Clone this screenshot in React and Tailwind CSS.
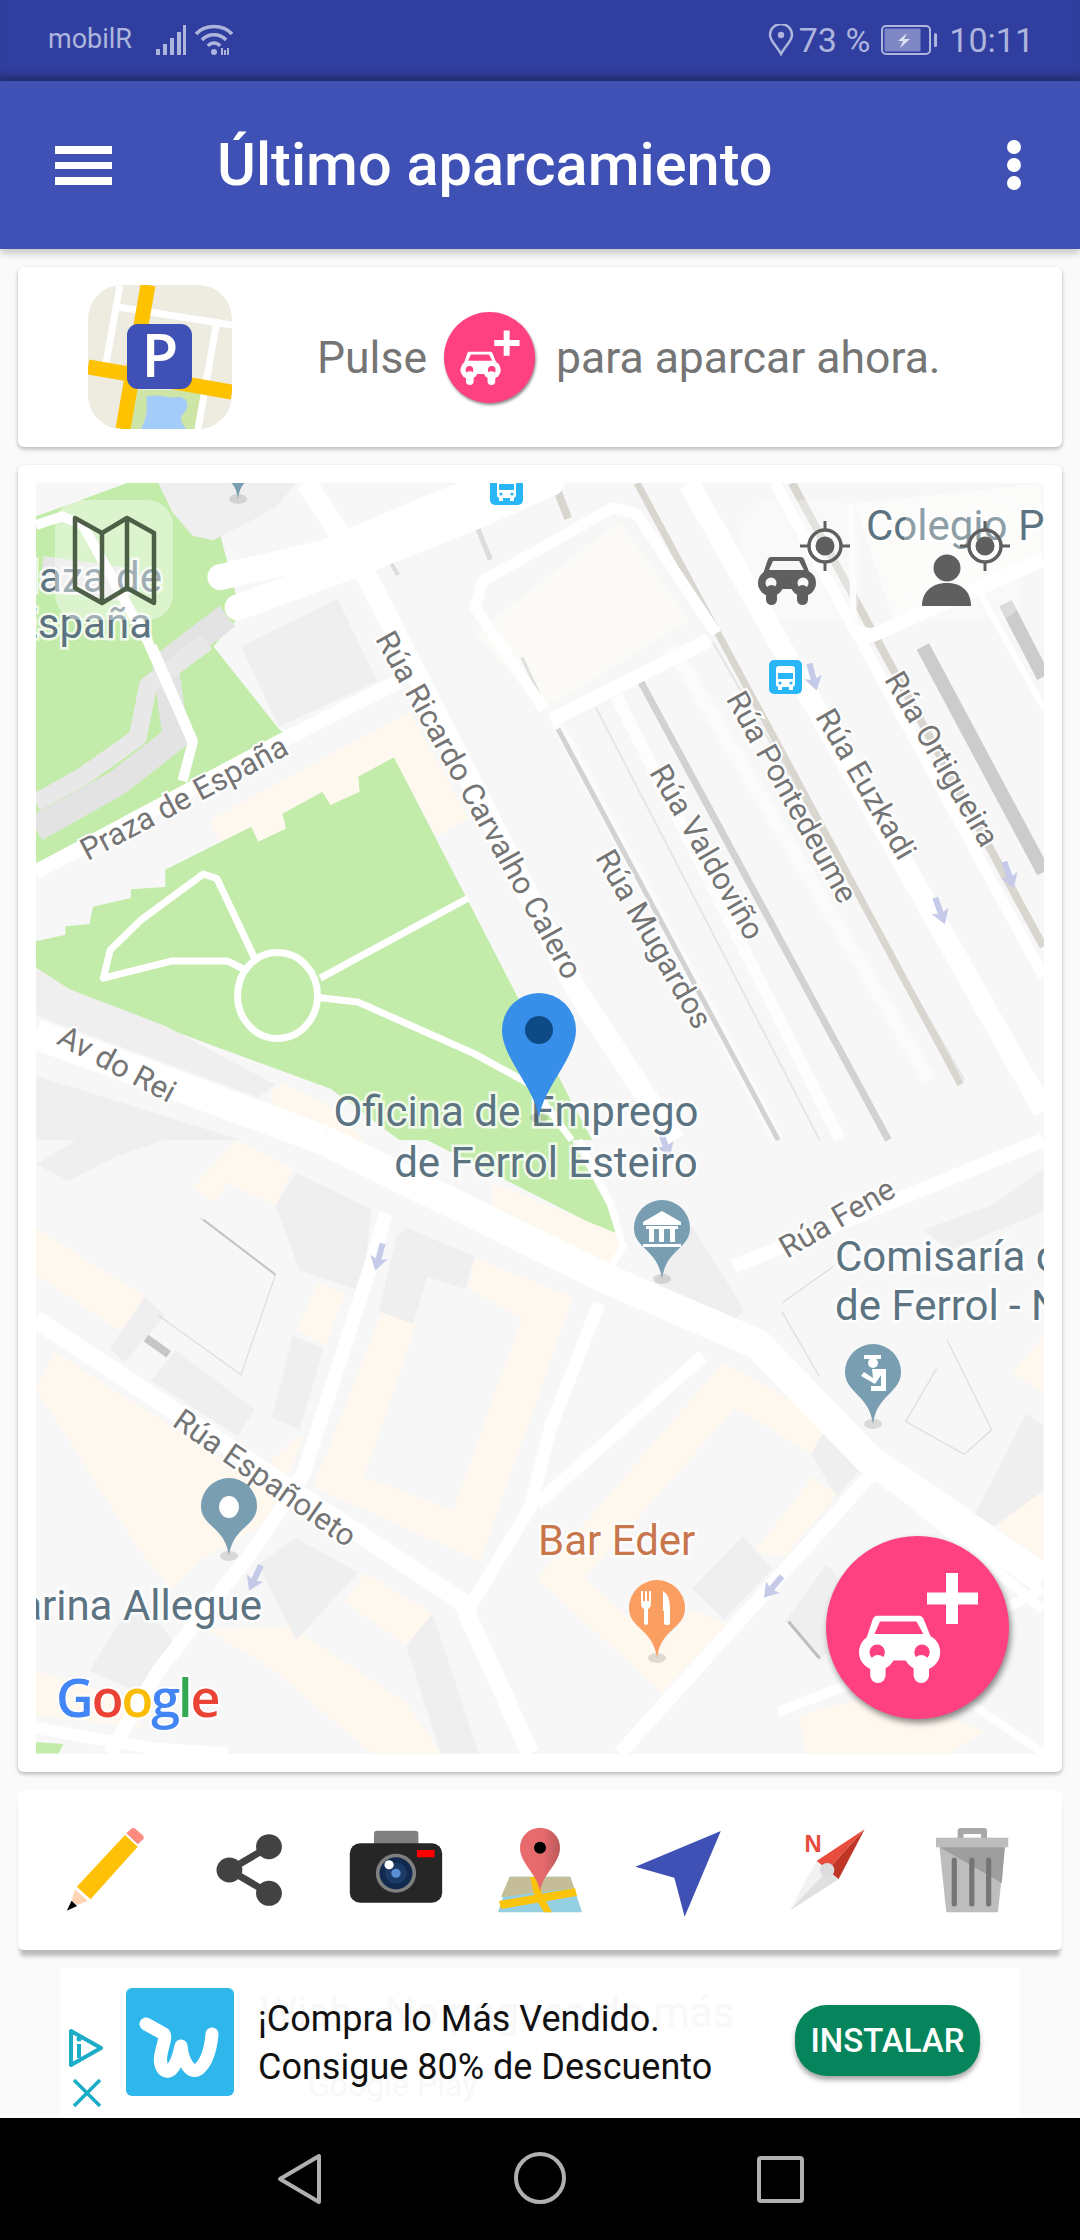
import React from "react";

const conv = (s, sy, oy) =>
  s.trim().split(/\s+/).map((p) => {
    const [a, b] = p.split(",").map(Number);
    return `${(a / 1.452).toFixed(1)},${(oy + b / sy).toFixed(1)}`;
  }).join(" ");
const z2 = (s) => conv(s, 2.306, 460);
const z3 = (s) => conv(s, 2.45, 1140);

const Poly = ({ p, f }) => <polygon points={p} fill={f} />;
const Road = ({ p, w = 14, c = "#ffffff", cap = "butt" }) => (
  <polyline points={p} fill="none" stroke={c} strokeWidth={w} strokeLinejoin="round" strokeLinecap={cap} />
);

const LABEL_FONT = { fontFamily: "Roboto, sans-serif" };
const StreetZ = ({ t, x, y, a, size = 31 }) => (
  <text
    x={0} y={0}
    transform={`translate(${x} ${y}) rotate(${a})`}
    textAnchor="middle" dominantBaseline="central"
    fontSize={size} fill="#757575"
    stroke="#ffffff" strokeWidth="4" paintOrder="stroke" style={LABEL_FONT}
  >{t}</text>
);
const Place = ({ t, x, y, anchor = "start", fill = "#5c7482", size = 42, op = 1 }) => (
  <text x={x} y={y} textAnchor={anchor} fontSize={size} fill={fill} opacity={op}
    stroke="#ffffff" strokeOpacity="0.75" strokeWidth="5" paintOrder="stroke" style={LABEL_FONT}>{t}</text>
);

const Drop = ({ cx, top, tip, r, fill }) => {
  const cy = top + r;
  return (
    <>
      <ellipse cx={cx} cy={tip} rx="9" ry="5" fill="#000" opacity="0.12" />
      <path d={`M${cx} ${tip}C${cx - 4} ${tip - 30} ${cx - r} ${cy + r * 0.75} ${cx - r} ${cy}A${r} ${r} 0 1 1 ${cx + r} ${cy}C${cx + r} ${cy + r * 0.75} ${cx + 4} ${tip - 30} ${cx} ${tip}Z`} fill={fill} />
    </>
  );
};

const Arrow = ({ x, y, rot = 20 }) => (
  <path transform={`translate(${x} ${y}) rotate(${rot})`} d="M-3 -14L3 -14L3 2L9 0L0 14L-9 0L-3 2Z" fill="#c5cae9" />
);

const Bus = ({ x, y }) => (
  <g transform={`translate(${x} ${y})`}>
    <rect x="0" y="0" width="33" height="34" rx="5" fill="#29b6f6" />
    <rect x="7" y="6" width="19" height="21" rx="3" fill="#ffffff" />
    <rect x="9" y="13" width="15" height="6" fill="#29b6f6" />
    <circle cx="11" cy="23" r="1.6" fill="#29b6f6" />
    <circle cx="22" cy="23" r="1.6" fill="#29b6f6" />
    <rect x="9" y="27" width="4" height="3" fill="#ffffff" />
    <rect x="20" y="27" width="4" height="3" fill="#ffffff" />
  </g>
);

const Target = ({ x, y }) => (
  <g transform={`translate(${x} ${y})`} stroke="#5f5f5f" fill="none">
    <circle r="16" strokeWidth="3.5" />
    <circle r="9.5" fill="#5f5f5f" stroke="none" />
    <path d="M0 -25V-16M0 16V25M-25 0H-16M16 0H25" strokeWidth="3" />
  </g>
);

const CarShape = ({ color, hole }) => (
  <g>
    <path d="M13 2H43Q45 2 46 4L52 19V34H5V19L10 4Q11 2 13 2Z" fill={color} />
    <path d="M15 6H41L46 15H11Z" fill={hole} />
    <circle cx="13" cy="28" r="13" fill={color} />
    <circle cx="45" cy="28" r="13" fill={color} />
    <circle cx="13" cy="28" r="5.5" fill={hole} />
    <circle cx="45" cy="28" r="5.5" fill={hole} />
    <rect x="8" y="30" width="11" height="20" rx="5.5" fill={color} />
    <rect x="39" y="30" width="11" height="20" rx="5.5" fill={color} />
  </g>
);

const BEIGE = "#fef8ef";
const BLD = "#efefef";

const Map = () => (
  <svg viewBox="36 483 1008 1271" width="1008" height="1271" className="block bg-[#f7f7f7]">
    {/* parks */}
    <Poly f="#c3ecaa" p={z2("52,130 185,53 300,53 350,355 310,430 405,620 420,640 52,930")} />
    <Poly f="#c3ecaa" p={z2("572,685 520,730 522,765 480,795 468,765 410,815 415,850 375,880 365,845 240,945 240,985 190,990 190,1010 135,1030 130,1070 95,1075 95,1095 52,1110 52,1190 240,1310 480,1450 580,1568 860,1568 830,1480")} />
    <Poly f="#c3ecaa" p={z3("620,0 900,240 910,250 830,0")} />
    <Poly f="#c3ecaa" p={z3("52,1475 92,1480 85,1503 52,1503")} />
    {/* beige areas */}
    <Poly f={BEIGE} p={z2("305,830 595,580 680,825 635,870 572,685 520,730 522,765 480,795 468,765 410,815 415,850 375,880 365,845 320,880")} />
    <Poly f={BEIGE} p={z2("390,1465 410,1435 480,1490 530,1568 440,1568")} />
    <Poly f={BEIGE} p={z3("690,290 832,385 697,1032 455,850 555,420 605,450 528,825 658,907 758,435 680,365")} />
    <Poly f={BEIGE} p={z3("280,115 345,0 425,70 400,160 330,105 312,150")} />
    <Poly f={BEIGE} p={z3("430,465 462,350 502,375 472,505")} />
    <Poly f={BEIGE} p={z3("52,215 212,385 175,470 52,330")} />
    <Poly f={BEIGE} p={z3("715,105 905,235 880,320 715,180")} />
    <Poly f={BEIGE} p={z3("52,610 80,520 368,830 428,730 440,730 395,930 290,1030 250,1100 200,1000")} />
    <Poly f={BEIGE} p={z3("780,1075 1050,545 1205,690 1178,770 1068,655 848,1075 962,1240 1005,1150 1055,1185 962,1355")} />
    <Poly f={BEIGE} p={z3("1095,1010 1180,825 1215,870 1140,1020")} />
    <Poly f={BEIGE} p={z3("500,1130 530,1060 628,1160 590,1240")} />
    <Poly f={BEIGE} p={z3("395,1295 300,1200 420,1190 590,1380 640,1503 540,1503")} />
    <Poly f={BEIGE} p={z3("52,1300 160,1360 210,1440 52,1410")} />
    <Poly f={BEIGE} p={z3("1160,1410 1290,1350 1430,1450 1380,1503 1170,1503")} />
    <Poly f={BEIGE} p={z3("1440,960 1500,860 1515,870 1515,1050")} />
    <Poly f={BEIGE} p={z3("1470,570 1515,480 1515,620")} />
    <Poly f="#fbfaf7" p={z2("690,400 900,140 1000,370 790,575")} />
    <Poly f="#fbfbfa" p={z2("1240,100 1515,53 1515,230 1300,380")} />
    {/* buildings */}
    <Poly f={BLD} p={z2("230,53 430,53 400,110 310,185 280,175 250,120")} />
    <Poly f={BLD} p={z2("350,430 490,320 548,510 405,615")} />
    <Poly f={BLD} p={z2("52,1170 100,1220 240,1305 400,1440 375,1470 52,1280")} />
    <Poly f={BLD} p={z2("52,1420 350,1568 52,1568")} />
    <Poly f={BLD} p={z3("400,160 430,80 540,170 525,370 435,320")} />
    <Poly f={BLD} p={z3("575,240 590,215 690,285 675,365 620,335 600,450 550,420")} />
    <Poly f={BLD} p={z3("395,680 425,480 470,510 435,710")} />
    <Poly f={BLD} p={z3("160,510 210,385 240,430 180,545")} />
    <Poly f={BLD} p={z3("220,590 255,515 370,660 345,725")} />
    <Poly f={BLD} p={z3("375,1040 430,975 520,1060 430,1225")} />
    <Poly f={BLD} p={z3("130,1300 200,1110 260,1250 210,1360")} />
    <Poly f={BLD} p={z3("590,1240 628,1160 695,1503 640,1503")} />
    <Poly f={BLD} p={z3("942,370 1005,210 1080,415 1065,445")} />
    <Poly f={BLD} p={z3("1005,1100 1078,970 1122,1050 1052,1175")} />
    <Poly f={BLD} p={z3("1178,770 1205,690 1262,780 1215,875")} />
    <Poly f={BLD} p={z3("1415,920 1490,670 1515,700 1515,860 1440,950")} />
    <Poly f={BLD} p={z3("1140,1180 1200,1040 1260,1150 1190,1275")} />
    <Poly f={BLD} p={z3("1340,220 1440,160 1515,70 1515,175 1380,270")} />
    <Poly f={BLD} p={z3("52,60 110,0 240,0 170,40 100,100")} />
    {/* plaza grey carriageways */}
    <Road p={z2("52,850 170,745 255,640 240,470 330,360")} w={26} c="#e3e3e3" />
    <Road p={z2("52,790 120,730 200,640 215,520 300,420")} w={18} c="#e8e8e8" />
    <Road p={z2("190,290 60,260")} w={34} c="#e6e6e6" />
    {/* white roads that run beside the strips */}
    <Road p={z2("445,53 530,260 840,1230 980,1568")} w={21} />
    <Road p={z2("810,610 1130,1568")} w={12} c="#fbfbfb" />
    <Road p={z2("865,570 1190,1568")} w={2} c="#e6e6e6" />
    <Road p={z2("895,545 1220,1568")} w={12} c="#fdfdfd" />
    <Road p={z2("975,430 1350,1430")} w={14} c="#fbfbfb" />
    <Road p={z2("1035,420 1400,1430")} w={2} c="#e4e4e4" />
    {/* grey strips */}
    <Road p={z2("925,53 1395,1440")} w={7} c="#d9d6d0" />
    <Road p={z2("1150,53 1515,1122")} w={8} c="#d9d6d0" />
    <Road p={z2("1340,430 1515,950")} w={14} c="#cccccc" />
    <Road p={z2("1460,330 1515,500")} w={14} c="#cccccc" />
    <Road p={z2("810,620 1130,1568")} w={5} c="#d2d2d2" />
    <Road p={z2("930,510 1290,1568")} w={7} c="#d2d2d2" />
    <Road p={z2("805,53 825,135")} w={8} c="#d9d6d0" />
    <Road p={z2("688,135 712,230")} w={5} c="#dcdcdc" />
    <Road p={z2("565,230 578,265")} w={4} c="#dcdcdc" />
    <Road p={z2("758,455 790,565")} w={3} c="#dfdfdf" />
    {/* white roads - upper */}
    <Road p={z2("1000,53 1515,1500")} w={21} />
    <Road p={z2("1125,53 1515,1190")} w={11} />
    <Road p={z2("52,950 400,655 580,510")} w={15} />
    <Road p={z2("800,600 1030,415")} w={14} />
    <Road p={z2("320,270 470,215 640,100 720,53")} w={26} cap="round" />
    <Road p={z2("345,340 500,250 690,130 800,53")} w={26} cap="round" />
    <Road p={z2("790,575 690,340 700,280 890,110 925,125 1040,400")} w={11} />
    <Road p={z2("1240,395 1265,405 1515,230")} w={14} />
    <Road p={z2("1235,100 1240,395")} w={6} c="#fdfdfd" />
    <Road p={z2("1420,300 1515,570")} w={6} />
    <Road p={z2("52,150 90,130 120,150 215,420 280,650 265,740")} w={10} />
    <Road p={z2("220,430 280,650")} w={11} />
    {/* park paths */}
    <g fill="none" stroke="#ffffff" strokeWidth="7">
      <polyline points={z2("370,1150 315,965 295,955 205,1060 160,1130 150,1195 250,1155 330,1155 355,1175")} strokeLinejoin="round" />
      <polyline points={z2("465,1195 680,1010")} />
      <polyline points={z2("465,1240 520,1250 690,1370 770,1440 830,1568")} />
      <ellipse cx={403 / 1.452} cy={460 + 1235 / 2.306} rx="40" ry="43" />
    </g>
    {/* white roads - lower */}
    <Road p={z2("52,1325 170,1392 470,1568")} w={30} />
    <Road p={z3("470,0 880,340 1100,500 1260,780 1515,1075")} w={30} />
    <Road p={z3("560,180 540,300 440,820 370,1000 230,1300 160,1503")} w={14} />
    <Road p={z3("52,440 240,650 670,1130 770,1503")} w={18} />
    <Road p={z3("870,400 800,700 770,900 680,1150")} w={13} />
    <Road p={z3("1020,530 780,890")} w={13} />
    <Road p={z3("1270,810 900,1503")} w={14} />
    <Road p={z3("1065,310 1515,0")} w={14} />
    <Road p={z3("840,0 885,150 905,260 880,330")} w={7} />
    <Road p={z3("1130,1400 1240,1330 1515,1100")} w={10} />
    <Road p={z3("52,1440 220,1490 330,1503")} w={12} />
    <Road p={z3("1400,1370 1470,1450 1515,1503")} w={8} />
    <Road p={z3("1290,840 1515,1150")} w={10} />
    {/* thin outlines */}
    <g fill="none" stroke="#dddddd" strokeWidth="1.2">
      <polyline points={z3("290,190 400,330 350,575 230,430")} />
      <polyline points={z3("1375,490 1440,710 1400,770 1315,690 1360,560")} />
      <polyline points={z3("1135,400 1210,310")} />
      <polyline points={z3("1135,420 1190,580")} />
    </g>
    <Road p={z3("212,485 245,525")} w={8} c="#c6c6c6" />
    <Road p={z3("1145,1180 1190,1270")} w={3} c="#bdbdbd" />
    <Road p={z3("295,195 400,330")} w={2} c="#c4c4c4" />

    {/* street labels */}
    <StreetZ t="Rúa Ricardo Carvalho Calero" x={479} y={805} a={61} />
    <StreetZ t="Rúa Mugardos" x={654} y={939} a={60} />
    <StreetZ t="Rúa Valdoviño" x={707} y={852} a={60} />
    <StreetZ t="Rúa Pontedeume" x={792} y={797} a={61} />
    <StreetZ t="Rúa Euzkadi" x={866} y={784} a={60} />
    <StreetZ t="Rúa Ortigueira" x={942} y={759} a={60} />
    <StreetZ t="Praza de España" x={184} y={798} a={-28} />
    <StreetZ t="Av do Rei" x={117} y={1064} a={28} />
    <StreetZ t="Rúa Fene" x={837} y={1218} a={-30} />
    <StreetZ t="Rúa Españoleto" x={265} y={1478} a={35} />

    <Arrow x={813} y={677} rot={-15} />
    <Arrow x={940} y={911} rot={-20} />
    <Arrow x={1009} y={875} rot={-20} />
    <Arrow x={379} y={1257} rot={15} />
    <Arrow x={255} y={1578} rot={25} />
    <Arrow x={773} y={1587} rot={40} />
    <Arrow x={665} y={1144} rot={-20} />

    {/* place labels */}
    <Place t="Plaza de" x={162} y={592} anchor="end" />
    <Place t="España" x={152} y={638} anchor="end" />
    <Place t="Colegio Público" x={866} y={540} />
    <Place t="Oficina de Emprego" x={516} y={1126} anchor="middle" />
    <Place t="de Ferrol Esteiro" x={546} y={1177} anchor="middle" />
    <Place t="Comisaría de Policía" x={835} y={1271} />
    <Place t="de Ferrol - Narón" x={835} y={1320} />
    <Place t="Marina Allegue" x={262} y={1620} anchor="end" />
    <Place t="Bar Eder" x={538} y={1555} fill="#c8764c" />

    {/* pins */}
    <Drop cx={238} top={440} tip={499} r={26} fill="#7a9eb1" />
    <Bus x={490} y={471} />
    <Bus x={769} y={660} />
    <Drop cx={662} top={1200} tip={1279} r={28} fill="#7a9eb1" />
    <g fill="#fff" transform="translate(662 1228)">
      <path d="M-19 -6L0 -17L19 -6V-3H-19Z" />
      <rect x="-16" y="-2" width="32" height="3" />
      <rect x="-13" y="1" width="5" height="13" /><rect x="-3" y="1" width="5" height="13" /><rect x="8" y="1" width="5" height="13" />
      <rect x="-19" y="16" width="38" height="3" />
    </g>
    <Drop cx={873} top={1344} tip={1424} r={28} fill="#7a9eb1" />
    <g fill="#fff" transform="translate(873 1372)">
      <rect x="-9" y="-17" width="17" height="4" />
      <circle cx="0" cy="-9" r="5" />
      <path d="M-1 -3H13V19H-2V14H8V3L2 12L-12 4L-9 0L0 6Z" />
    </g>
    <Drop cx={229} top={1478} tip={1556} r={28} fill="#7a9eb1" />
    <ellipse cx={229} cy={1507} rx="10" ry="11" fill="#fff" />
    <Drop cx={657} top={1580} tip={1658} r={28} fill="#fb9e62" />
    <g fill="#fff" transform="translate(657 1607)">
      <path d="M-16 -16H-14V-6H-12V-16H-10V-6H-8V-16H-6V-4Q-6 1 -9 2V16Q-9 18 -11 18Q-13 18 -13 16V2Q-16 1 -16 -4Z" />
      <path d="M6 -16Q13 -12 13 2V16Q13 18 10 18Q7 18 7 16V4H6Z" />
    </g>
    {/* user location */}
    <Drop cx={539} top={993} tip={1118} r={37} fill="#378fe9" />
    <ellipse cx={539} cy={1030} rx="14" ry="14" fill="#0e4a85" />

    {/* google */}
    <text x={56} y={1717} fontSize="52" fontWeight="600" stroke="#ffffff" strokeOpacity="0.8" strokeWidth="4" paintOrder="stroke" style={{ fontFamily: "'Open Sans', Roboto, sans-serif", letterSpacing: "-2px" }}>
      <tspan fill="#4285f4">G</tspan><tspan fill="#ea4335">o</tspan><tspan fill="#fbbc05">o</tspan><tspan fill="#4285f4">g</tspan><tspan fill="#34a853">l</tspan><tspan fill="#ea4335">e</tspan>
    </text>

    {/* overlay toggles */}
    <rect x="55" y="500" width="118" height="120" rx="26" fill="#ffffff" opacity="0.42" />
    <g fill="none" stroke="#4d5f46" strokeWidth="4.5" strokeLinejoin="round">
      <path d="M75 518L102 533L127 518L154 533V603L127 588L102 603L75 588Z" />
      <path d="M102 533V603M127 518V588" />
    </g>
    <rect x="742" y="500" width="118" height="120" rx="26" fill="#ffffff" opacity="0.3" />
    <rect x="904" y="500" width="118" height="120" rx="26" fill="#ffffff" opacity="0.3" />
    <Target x={825} y={546} />
    <g transform="translate(758 555)"><CarShape color="#5f5f5f" hole="#f7f7f7" /></g>
    <Target x={985} y={546} />
    <circle cx="947" cy="568" r="13.5" fill="#5f5f5f" />
    <path d="M922 606C922 590 934 583 947 583C960 583 971 590 971 606Z" fill="#5f5f5f" />
  </svg>
);

const CarPlus = ({ size }) => (
  <svg viewBox="0 0 183 183" width={size} height={size} className="block">
    <g transform="translate(33 77) scale(1.4)"><CarShape color="#ffffff" hole="#ff4081" /></g>
    <path d="M120 37H132V56.500H152V68.500H132V88H120V68.500H101V56.500H120Z" fill="#ffffff" />
  </svg>
);

const AppIcon = () => (
  <svg viewBox="0 0 144 144" width="144" height="144" className="block rounded-[34px]">
    <rect width="144" height="144" fill="#eeebe0" />
    <path d="M47 105H115L108 144H42Z" fill="#cde5a6" />
    <path d="M58 112C70 108 80 114 90 112C100 112 102 122 96 128C90 133 94 138 98 144H53C58 134 60 126 58 112Z" fill="#a3ccf9" />
    <path d="M32 0L16 90M30 22L144 40M128 41L110 144" stroke="#fff" strokeWidth="7" fill="none" />
    <path d="M60 0L35 144M0 82L144 107" stroke="#fec200" strokeWidth="15" fill="none" />
    <rect x="39" y="39" width="65" height="65" rx="11" fill="#3f51b5" />
    <text x="72" y="92" textAnchor="middle" fontSize="60" fontWeight="600" fill="#fff" style={{ fontFamily: "'Open Sans', sans-serif" }}>P</text>
  </svg>
);

const Tool = ({ dx = 0, children }) => (
  <svg viewBox="0 0 144 124" width="144" height="124" className="block">
    <g transform={`translate(${dx} 0) scale(1.033 1)`}>{children}</g>
  </svg>
);

const Tools = () => (
  <>
    <Tool dx={0.5}>
      <path d="M85.700 27L98 38.700L52.300 91.300L39 78.700Z" fill="#ffc107" />
      <path d="M92.300 20.300Q94 19.500 96 21L103 27.500Q104.500 29.500 103.500 31L98 36.300L87 25.300Z" fill="#ff8a80" />
      <path d="M37.300 81.300L49.700 93L39.300 97L34 92.700Z" fill="#ffd5b5" />
      <path d="M34 92.700L39.300 98L29.300 102.700Z" fill="#000" />
    </Tool>
    <Tool dx={5.3}>
      <g fill="#424242">
        <circle cx="81" cy="38.700" r="12.500" /><circle cx="42.700" cy="62" r="12.500" /><circle cx="81" cy="85.300" r="12.500" />
      </g>
      <path d="M81 38.700L42.700 62L81 85.300" fill="none" stroke="#424242" strokeWidth="7" />
    </Tool>
    <Tool dx={10}>
      <rect x="38.700" y="22.700" width="43" height="20" rx="3" fill="#808080" />
      <rect x="15.300" y="35.300" width="89.400" height="59.400" rx="10" fill="#262626" />
      <circle cx="60" cy="65.300" r="19.500" fill="#7f7f7f" />
      <circle cx="60" cy="65.300" r="16" fill="#10294f" />
      <circle cx="60" cy="65.300" r="10.500" fill="#1b3a66" />
      <circle cx="60" cy="65.300" r="4.500" fill="#5b8fd6" />
      <circle cx="53.300" cy="56.700" r="4.500" fill="#ffffff" />
      <rect x="80.300" y="42" width="17" height="7.300" fill="#ff0000" />
    </Tool>
    <svg viewBox="0 0 144 124" width="144" height="124" className="block">
      <path d="M41.600 68.700H102.300L114 104.300H30Z" fill="#93cfe0" />
      <path d="M41.600 68.700H102.300L106 80L33 89Z" fill="#c5bd97" />
      <path d="M31 93L107 80L109 88L33 101Z" fill="#fcc30b" />
      <path d="M62 69L67 90L76 104.300H84L74 86L70 69Z" fill="#fcc30b" />
      <defs>
        <linearGradient id="pinG" x1="0" x2="1" y1="0" y2="0"><stop offset="0.55" stopColor="#e76a6d" /><stop offset="1" stopColor="#bb5a5a" /></linearGradient>
      </defs>
      <path d="M72 84C70 66 52 56 52 39.700A20 20 0 0 1 92 39.700C92 56 74 66 72 84Z" fill="url(#pinG)" />
      <circle cx="72" cy="39.700" r="6" fill="#000" />
    </svg>
    <Tool dx={2.4}>
      <path d="M103 23L20.300 58.700L58 69.700L68 108.700Z" fill="#3f51b5" />
    </Tool>
    <Tool dx={7.1}>
      <path d="M51.700 53L98.300 21.300L62.300 62Z" fill="#e74c3c" />
      <path d="M98.300 21.300L73 71.300L62.300 62Z" fill="#bf3627" />
      <path d="M51.700 53L25.700 102.700L62.300 62Z" fill="#f2f2f2" />
      <path d="M25.700 102.700L73 71.300L62.300 62Z" fill="#e0e0e0" />
      <circle cx="62" cy="62" r="7" fill="#dcdcdc" />
      <text x="48.500" y="44" textAnchor="middle" fontSize="23" fontWeight="700" fill="#e74c3c" style={{ fontFamily: "'Liberation Sans', sans-serif" }}>N</text>
    </Tool>
    <Tool dx={11.9}>
      <path d="M44.300 32V23Q44.300 20 47 20H70Q72.700 20 72.700 23V32H67V26H50V32Z" fill="#a8a8a8" />
      <rect x="23.300" y="29.700" width="70" height="9.600" fill="#bdbdbd" />
      <path d="M26.700 39.300H90L83.300 104.300H33.300Z" fill="#bdbdbd" />
      <path d="M27 39.300H90L87 75Z" fill="#9e9e9e" />
      <g stroke="#757575" strokeWidth="5" strokeLinecap="round">
        <path d="M41 52V96M58 52V96M74.300 52V96" />
      </g>
    </Tool>
  </>
);

export default function App() {
  return (
    <div className="w-[1080px] h-[2240px] flex flex-col bg-[#fafafa] overflow-hidden font-['Roboto',sans-serif]">
      {/* status bar */}
      <div className="h-[81px] shrink-0 bg-[#303f9f] flex items-center justify-between pl-[48px] pr-[46px] pb-[2px] text-[#aeb5dd] shadow-[inset_0_-12px_10px_-8px_rgba(0,0,0,0.35)]">
        <div className="flex items-center">
          <span className="text-[27px] leading-none">mobilR</span>
          <svg width="80" height="32" viewBox="0 0 80 32" className="block ml-[22px]">
            <g fill="#aeb5dd">
              <rect x="2" y="25" width="4" height="6" /><rect x="9" y="20" width="4" height="11" /><rect x="16" y="14" width="4" height="17" /><rect x="23" y="8" width="4" height="23" /><rect x="29" y="1" width="3" height="30" />
            </g>
            <g fill="none" stroke="#aeb5dd" strokeWidth="3.500">
              <path d="M42 10C51 0 69 0 78 10" /><path d="M48 16C54 9 66 9 72 16" /><path d="M54 22C57 18 63 18 66 22" />
            </g>
            <circle cx="60" cy="28" r="3" fill="#aeb5dd" />
            <path d="M68 24V31M71 31V26M74 31V24" stroke="#aeb5dd" strokeWidth="2" />
          </svg>
        </div>
        <div className="flex items-center">
          <svg width="26" height="32" viewBox="0 0 26 32" className="block">
            <path d="M13 30C9 22 2 17 2 11A11 11 0 0 1 24 11C24 17 17 22 13 30Z" fill="none" stroke="#aeb5dd" strokeWidth="2.500" />
            <circle cx="13" cy="11" r="3.200" fill="#aeb5dd" />
          </svg>
          <span className="text-[34px] leading-none ml-[5px]">73 %</span>
          <svg width="58" height="30" viewBox="0 0 58 30" className="block ml-[11px]">
            <rect x="1" y="1" width="48" height="28" rx="4" fill="none" stroke="#aeb5dd" strokeWidth="2" />
            <rect x="3.500" y="3.500" width="36" height="23" rx="1" fill="#7f88c4" />
            <path d="M26 8L17 16H22L19 23L29 14H23Z" fill="#dfe2f3" />
            <rect x="53" y="8" width="3" height="14" rx="1.500" fill="#aeb5dd" />
          </svg>
          <span className="text-[34px] leading-none ml-[10px]">10:11</span>
        </div>
      </div>
      {/* app bar */}
      <div className="relative z-10 h-[168px] shrink-0 bg-[#3f51b5] flex items-center pl-[55px] shadow-[0_4px_8px_rgba(0,0,0,0.22)]">
        <div className="w-[57px] flex flex-col gap-[8px]">
          <div className="h-[8px] bg-white" /><div className="h-[7px] bg-white" /><div className="h-[8px] bg-white" />
        </div>
        <h1 className="ml-[105px] pt-[2px] text-[59.5px] leading-none font-medium text-white whitespace-nowrap">Último aparcamiento</h1>
        <div className="ml-auto mr-[59px] flex flex-col gap-[4px]">
          <div className="w-[14px] h-[14px] rounded-full bg-white" /><div className="w-[14px] h-[14px] rounded-full bg-white" /><div className="w-[14px] h-[14px] rounded-full bg-white" />
        </div>
      </div>
      {/* hint card */}
      <div className="mx-[18px] mt-[18px] h-[180px] shrink-0 bg-white rounded-[6px] shadow-[0_2px_4px_rgba(0,0,0,0.28)] flex items-center pl-[70px] text-[#757575] text-[44.5px]">
        <AppIcon />
        <span className="ml-[85px] leading-none pt-[2px]">Pulse</span>
        <div className="ml-[17px] w-[91px] h-[91px] rounded-full bg-[#ff4081] shadow-[1px_2px_3px_rgba(0,0,0,0.45)]">
          <CarPlus size={91} />
        </div>
        <span className="ml-[21px] leading-none pt-[2px]">para aparcar ahora.</span>
      </div>
      {/* map card */}
      <div className="relative mx-[18px] mt-[18px] h-[1307px] shrink-0 bg-white rounded-[6px] shadow-[0_2px_4px_rgba(0,0,0,0.28)] p-[18px]">
        <Map />
        <div className="absolute left-[808px] top-[1071px] w-[183px] h-[183px] rounded-full bg-[#ff4081] shadow-[2px_4px_6px_rgba(0,0,0,0.45)]">
          <CarPlus size={183} />
        </div>
      </div>
      {/* tools card */}
      <div className="mx-[18px] mt-[18px] h-[160px] shrink-0 bg-white rounded-[6px] shadow-[0_8px_4px_-2px_rgba(0,0,0,0.25)] flex items-center justify-center">
        <Tools />
      </div>
      {/* ad */}
      <div className="relative mx-[60px] mt-[18px] flex-1 bg-[#ffffff] flex items-center">
        <div className="w-[66px] h-full relative shrink-0">
          <svg width="40" height="80" viewBox="0 0 40 80" className="absolute left-[7px] top-[60px]">
            <path d="M4 3L34 20L4 37Z" fill="none" stroke="#1bacc8" strokeWidth="4" strokeLinejoin="round" />
            <path d="M12 16V30" stroke="#1bacc8" strokeWidth="4" />
            <circle cx="12" cy="11" r="2.500" fill="#1bacc8" />
            <path d="M7 52L33 78M33 52L7 78" stroke="#1bacc8" strokeWidth="3.500" />
          </svg>
        </div>
        <div className="w-[108px] h-[108px] shrink-0 bg-[#2fb7ec] rounded-[6px] -mt-[3px] flex items-center justify-center">
          <svg width="108" height="108" viewBox="0 0 108 108">
            <path d="M20 36L38 46C42 52 28 72 38 82C46 88 52 72 55 58C57 76 66 88 74 80C82 72 85 58 86 46" fill="none" stroke="#fff" strokeWidth="13" strokeLinecap="round" strokeLinejoin="round" />
          </svg>
        </div>
        <div className="relative ml-[24px] text-[36px] leading-[48px] text-[#111111] -mt-[1px] whitespace-nowrap">
          <div className="absolute left-[2px] -top-[3px] text-[#f8f8f8] text-[42px] leading-none">Wish - No pagues de más</div>
          <div className="absolute left-[50px] top-[74px] text-[#f8f8f8] text-[32px] leading-none">Google Play</div>
          <div className="relative">¡Compra lo Más Vendido.</div>
          <div className="relative">Consigue 80% de Descuento</div>
        </div>
        <div className="ml-auto mr-[40px] w-[185px] h-[71px] -mt-[5px] shrink-0 rounded-[32px] bg-[#06855c] shadow-[0_4px_5px_rgba(0,0,0,0.35)] flex items-center justify-center text-white text-[33px] font-medium leading-none">INSTALAR</div>
      </div>
      {/* nav bar */}
      <div className="h-[122px] shrink-0 bg-black flex items-center justify-center">
        <svg width="1080" height="122" viewBox="0 2118 1080 122" className="block">
          <g fill="none" stroke="#b0b0b0" strokeWidth="4" strokeLinejoin="round">
            <path d="M319 2156V2202L280 2179Z" />
            <circle cx="540" cy="2178" r="24" />
            <rect x="759" y="2158" width="43" height="43" rx="2" />
          </g>
        </svg>
      </div>
    </div>
  );
}
